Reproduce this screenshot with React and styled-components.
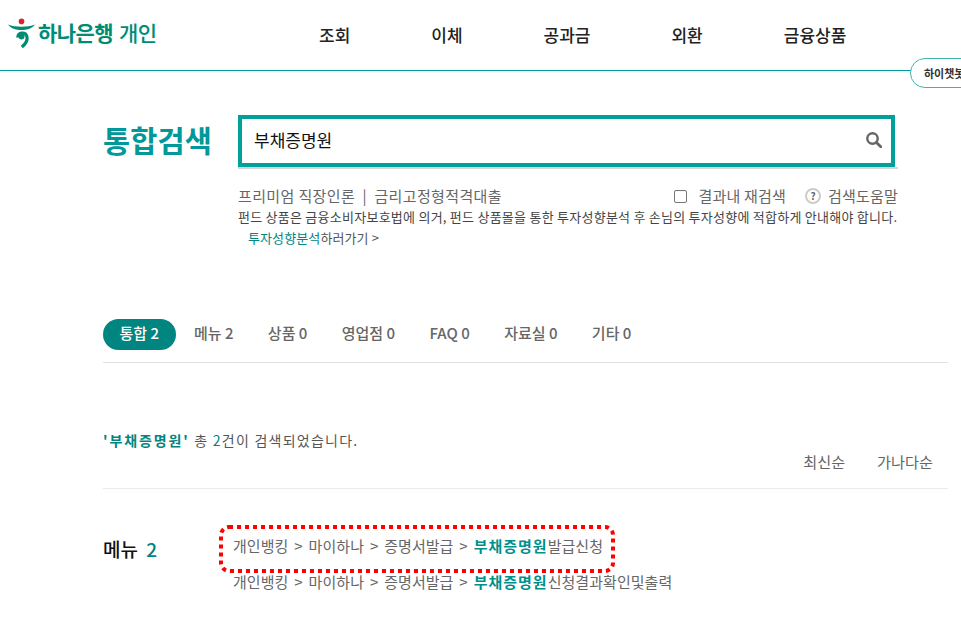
import React from "react";
import styled, { createGlobalStyle } from "styled-components";

const Global = createGlobalStyle`
  html, body { margin: 0; padding: 0; background: #fff; overflow: hidden; }
  body { font-family: "Noto Sans CJK KR", "Noto Sans", sans-serif; color: #666; width: 961px; height: 621px; }
  * { box-sizing: border-box; }
`;
const Page = styled.div`width: 961px; height: 621px; overflow: hidden; position: relative;`;
const Header = styled.header`
  height: 71px; border-bottom: 1px solid #009c9c; display: flex; align-items: center; position: relative;
`;
const Logo = styled.div`
  width: 319px; padding: 18px 0 0 8px; height: 100%; display: flex; align-items: flex-start; gap: 3px;
`;
const LogoWord = styled.span`
  font-size: 21px; line-height: 28px; font-weight: 700; color: #008c73; letter-spacing: -0.6px; white-space: pre; word-spacing: 2px;
`;
const LogoSub = styled.span`font-weight: 500;`;
const Nav = styled.nav`display: flex; gap: 81px;`;
const NavItem = styled.a`font-size: 17px; font-weight: 500; color: #222; line-height: 24px;`;
const ChatPill = styled.div`
  position: absolute; left: 910px; top: 58px; width: 70px; height: 30px; background: #fff;
  border: 1px solid #3fb5ae; border-radius: 15px; font-size: 11px; font-weight: 700; color: #333;
  line-height: 28px; padding-left: 13px; white-space: nowrap;
`;
const SearchArea = styled.section`padding: 44px 0 0 103px; display: flex; align-items: flex-start;`;
const Title = styled.h1`
  margin: 0; width: 135px; font-size: 29.5px; line-height: 48px; font-weight: 700; color: #00989a; letter-spacing: 0.1px;
`;
const SearchCol = styled.div`width: 660px; display: flex; flex-direction: column;`;
const SearchBox = styled.div`
  position: relative; width: 657px; height: 52px; border: 4px solid #00a09d;
  display: flex; align-items: center; justify-content: space-between; padding: 0 9px 3px 12px; background: #fff;
  &::after {
    content: ""; position: absolute; left: -4px; right: -7px; bottom: -6px; height: 2px; background: #d4d4d4;
  }
`;
const SearchText = styled.span`font-size: 17px; color: #111;`;
const Links = styled.div`display: flex; justify-content: space-between; align-items: center; margin-top: 19px; height: 18px;`;
const Promo = styled.div`font-size: 15px; color: #666; white-space: pre; letter-spacing: 0.37px;`;
const Options = styled.div`display: flex; align-items: center; font-size: 15px; color: #666; letter-spacing: 0.2px;`;
const Check = styled.span`
  width: 13px; height: 13px; border: 1px solid #767676; border-radius: 2px; margin: 2px 11px 0 0; background: #fff;
`;
const Help = styled.span`
  width: 16px; height: 16px; border-radius: 50%; border: 2px solid #ccc; margin: 2px 7px 0 19px;
  font-size: 10px; font-weight: 700; line-height: 12px; text-align: center; color: #666; letter-spacing: 0;
`;
const Notice = styled.p`margin: 3px 0 0; font-size: 13px; line-height: 20px; color: #444; white-space: nowrap; letter-spacing: 0.25px;`;
const NoticeLink = styled.a`display: block; margin: 1px 0 0 10px; font-size: 13px; line-height: 20px; color: #555; letter-spacing: 0.1px;`;
const Teal = styled.span`color: #008580;`;
const Tabs = styled.div`
  margin: 71px 13px 0 103px; height: 44px; border-bottom: 1px solid #e2e2e2; display: flex; gap: 34.4px; align-items: flex-start;
`;
const Tab = styled.a`
  font-size: 15px; font-weight: 500; line-height: 28px; height: 31px; white-space: nowrap;
  color: ${p => (p.$active ? "#fff" : "#666")};
  ${p => p.$active && "background:#008580; border-radius:16px; padding:0 16.5px; margin-right:-16px;"}
`;
const ResultHead = styled.div`margin: 67px 13px 0 103px; height: 59px; border-bottom: 1px solid #ebebeb;`;
const Summary = styled.p`margin: 0; font-size: 14px; line-height: 20px; color: #555; letter-spacing: 1.25px;`;
const Key = styled.b`color: #008580; font-weight: 700; letter-spacing: 1.9px;`;
const Sort = styled.div`display: flex; justify-content: flex-end; gap: 32px; padding-right: 15px; font-size: 15.2px; line-height: 20px; margin-top: 1px; color: #666;`;
const MenuSection = styled.section`margin: 33px 0 0 103px; display: flex;`;
const SectionTitle = styled.h2`margin: 15px 0 0; width: 130px; font-size: 19px; line-height: 24px; font-weight: 500; color: #111; word-spacing: 4px;`;
const Rows = styled.div`display: flex; flex-direction: column; gap: 16px; padding-top: 14px;`;
const Row = styled.div`font-size: 15px; line-height: 20px; color: #666; white-space: nowrap; position: relative; word-spacing: 2.5px; letter-spacing: 0.05px;`;
const Mark = styled.b`color: #00908c; font-weight: 700; letter-spacing: 1px;`;
const Callout = styled.svg`
  position: absolute; left: -14px; top: -11px; width: 396px; height: 48px; pointer-events: none; overflow: visible;
`;
const Crumb = ({ children, callout }) => (
  <Row>
    {callout && (
      <Callout viewBox="0 0 396 48" fill="none">
        <rect x="2" y="2" width="392" height="44" rx="8" stroke="#f00" strokeWidth="4" strokeDasharray="4 4" />
      </Callout>
    )}
    개인뱅킹 &gt; 마이하나 &gt; 증명서발급 &gt; <Mark>부채증명원</Mark>{children}
  </Row>
);

export default function App() {
  return (
    <Page>
      <Global />
      <Header>
        <Logo>
          <svg width="27" height="30" viewBox="0 0 27 30" fill="none">
            <circle cx="13.5" cy="3.4" r="2.8" fill="#e0202a" />
            <path d="M0 6.5 C7 9.5 20 9.5 27 6.5 C24 11 18 12 13.5 12 C9 12 3 11 0 6.5 Z" fill="#008c73" />
            <path d="M10 19.5 C9 15 17 13 18.7 18 C20 22 17.5 26 13.8 29" stroke="#008c73" strokeWidth="3.2" fill="none" />
            <circle cx="13.5" cy="18.5" r="3" fill="#008c73" />
          </svg>
          <LogoWord>하나은행 <LogoSub>개인</LogoSub></LogoWord>
        </Logo>
        <Nav>
          <NavItem>조회</NavItem>
          <NavItem>이체</NavItem>
          <NavItem>공과금</NavItem>
          <NavItem>외환</NavItem>
          <NavItem>금융상품</NavItem>
        </Nav>
        <ChatPill>하이챗봇</ChatPill>
      </Header>
      <SearchArea>
        <Title>통합검색</Title>
        <SearchCol>
          <SearchBox>
            <SearchText>부채증명원</SearchText>
            <svg width="16" height="16" viewBox="0 0 16 16" fill="none">
              <circle cx="6.5" cy="6.5" r="5.2" stroke="#666" strokeWidth="2.4" />
              <path d="M10.4 10.4 L14.8 14.8" stroke="#666" strokeWidth="2.8" strokeLinecap="round" />
            </svg>
          </SearchBox>
          <Links>
            <Promo>프리미엄 직장인론  |  금리고정형적격대출</Promo>
            <Options>
              <Check />결과내 재검색<Help>?</Help>검색도움말
            </Options>
          </Links>
          <Notice>펀드 상품은 금융소비자보호법에 의거, 펀드 상품몰을 통한 투자성향분석 후 손님의 투자성향에 적합하게 안내해야 합니다.</Notice>
          <NoticeLink><Teal>투자성향분석</Teal>하러가기 &gt;</NoticeLink>
        </SearchCol>
      </SearchArea>
      <Tabs>
        <Tab $active>통합 2</Tab>
        <Tab>메뉴 2</Tab>
        <Tab>상품 0</Tab>
        <Tab>영업점 0</Tab>
        <Tab>FAQ 0</Tab>
        <Tab>자료실 0</Tab>
        <Tab>기타 0</Tab>
      </Tabs>
      <ResultHead>
        <Summary><Key>'부채증명원'</Key> 총 <Teal>2</Teal>건이 검색되었습니다.</Summary>
        <Sort><span>최신순</span><span>가나다순</span></Sort>
      </ResultHead>
      <MenuSection>
        <SectionTitle>메뉴 <Teal>2</Teal></SectionTitle>
        <Rows>
          <Crumb callout>발급신청</Crumb>
          <Crumb>신청결과확인및출력</Crumb>
        </Rows>
      </MenuSection>
    </Page>
  );
}
